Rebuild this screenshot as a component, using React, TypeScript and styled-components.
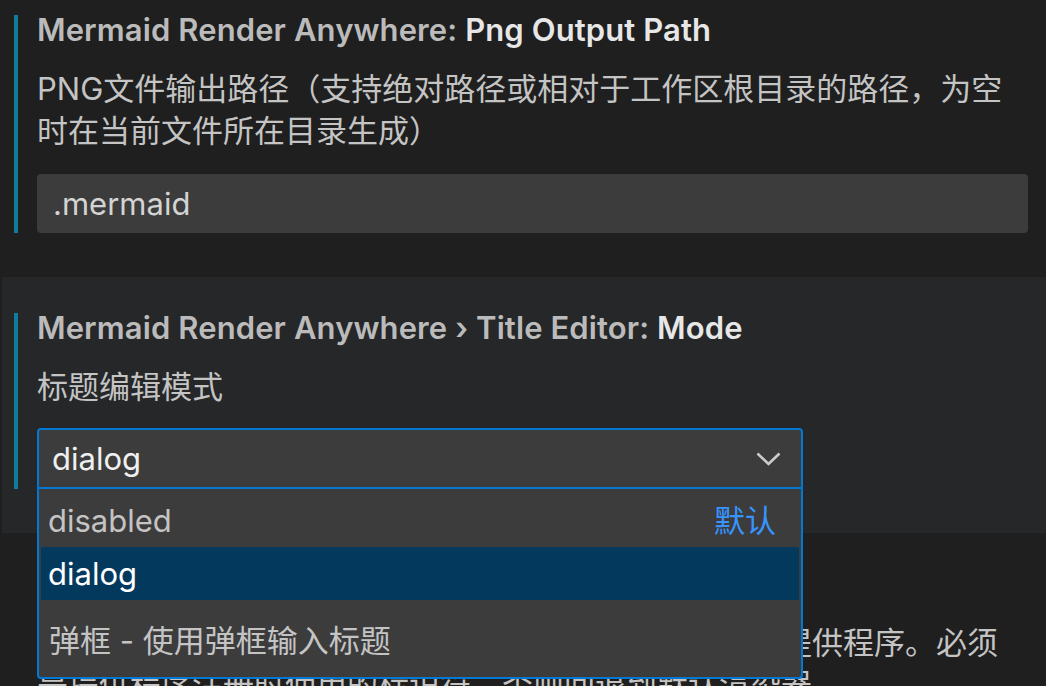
import React from 'react';
import styled, { createGlobalStyle } from 'styled-components';

const GlobalStyle = createGlobalStyle`
  html, body {
    margin: 0;
    padding: 0;
    background: #1f1f1f;
    overflow: hidden;
  }
  body {
    font-family: "Inter", "Noto Sans CJK SC", sans-serif;
    font-size: 31px;
    color: #cccccc;
  }
`;

const SettingsList = styled.div`
  width: 1046px;
  height: 686px;
  overflow: hidden;
  background: #1f1f1f;
  display: flex;
  flex-direction: column;
`;

const SettingItem = styled.div<{ $focused?: boolean; $first?: boolean }>`
  margin-left: 2px;
  padding: ${p => (p.$first ? '15px' : '36px')} 18px 44px 12px;
  background: ${p => (p.$focused ? '#262729' : 'transparent')};
  position: relative;
`;

const SettingBody = styled.div<{ $modified?: boolean }>`
  border-left: 4px solid ${p => (p.$modified ? '#0c7d9d' : 'transparent')};
  padding-left: 19px;
  position: relative;
`;

const Title = styled.div`
  font-weight: 600;
  line-height: 30px;
  letter-spacing: 0.1px;
  color: #bbbbbb;
  white-space: nowrap;
`;

const Label = styled.span`
  color: #e7e7e7;
`;

const Description = styled.div`
  margin-top: 23px;
  line-height: 42px;
  color: #c4c4c4;
`;

const TextInput = styled.div`
  margin-top: 22px;
  height: 59px;
  line-height: 59px;
  padding: 0 16px;
  background: #3c3c3c;
  border-radius: 4px;
  color: #d4d4d4;
`;

const SelectWrap = styled.div`
  margin-top: 20px;
  width: 766px;
  position: relative;
`;

const SelectBox = styled.div`
  height: 57px;
  display: flex;
  align-items: center;
  justify-content: space-between;
  padding: 0 20px 0 13px;
  background: #3c3c3c;
  border: 2px solid #0078d4;
  border-radius: 4px 4px 0 0;
  color: #f0f0f0;
`;

const Dropdown = styled.div`
  position: absolute;
  left: 0;
  right: 0;
  top: 61px;
  z-index: 10;
  background: #3c3c3c;
  border: 2px solid #0078d4;
  border-top: none;
  border-radius: 0 0 4px 4px;
  padding: 5px 2px 0;
`;

const Option = styled.div<{ $selected?: boolean }>`
  height: 53px;
  line-height: 53px;
  padding: 0 23px 0 7px;
  display: flex;
  justify-content: space-between;
  background: ${p => (p.$selected ? '#04395e' : 'transparent')};
  color: ${p => (p.$selected ? '#ffffff' : '#c4c4c4')};
`;

const DefaultTag = styled.span`
  color: #3794ff;
`;

const OptionDescription = styled.div`
  padding: 20px 8px 15px;
  line-height: 42px;
  color: #c4c4c4;
`;

const Chevron = () => (
  <svg width="25" height="14" viewBox="0 0 25 14" fill="none">
    <polyline points="1.5,1.5 12.5,12 23.5,1.5" stroke="#cccccc" strokeWidth="2.6" />
  </svg>
);

export default function App() {
  return (
    <SettingsList>
      <GlobalStyle />
      <SettingItem $first>
        <SettingBody $modified>
          <Title>
            Mermaid Render Anywhere: <Label>Png Output Path</Label>
          </Title>
          <Description>PNG文件输出路径（支持绝对路径或相对于工作区根目录的路径，为空时在当前文件所在目录生成）</Description>
          <TextInput>.mermaid</TextInput>
        </SettingBody>
      </SettingItem>

      <SettingItem $focused>
        <SettingBody $modified>
          <Title>
            Mermaid Render Anywhere › Title Editor: <Label>Mode</Label>
          </Title>
          <Description>标题编辑模式</Description>
          <SelectWrap>
            <SelectBox>
              <span>dialog</span>
              <Chevron />
            </SelectBox>
            <Dropdown>
              <Option>
                <span>disabled</span>
                <DefaultTag>默认</DefaultTag>
              </Option>
              <Option $selected>
                <span>dialog</span>
              </Option>
              <OptionDescription>弹框 - 使用弹框输入标题</OptionDescription>
            </Dropdown>
          </SelectWrap>
        </SettingBody>
      </SettingItem>

      <SettingItem>
        <SettingBody>
          <Title>
            Mermaid Render Anywhere: <Label>Renderer</Label>
          </Title>
          <Description>指定渲染图表时使用的外部渲染器名称，对应已注册的提供程序。必须是提供程序注册时使用的标识符，否则回退到默认渲染器。</Description>
        </SettingBody>
      </SettingItem>
    </SettingsList>
  );
}
